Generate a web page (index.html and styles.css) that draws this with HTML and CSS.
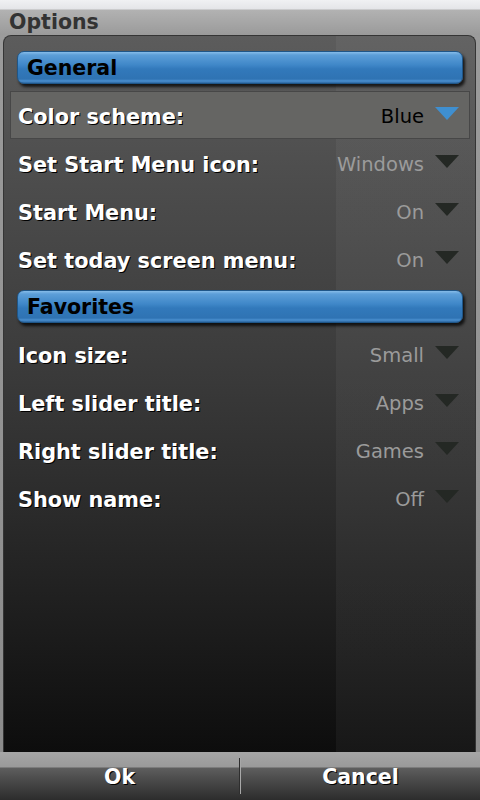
FILE: index.html
```html
<!DOCTYPE html>
<html>
<head>
<meta charset="utf-8">
<link rel="stylesheet" href="styles.css">
</head>
<body>
<div class="screen">
  <div class="titlebar"><span class="title">Options</span></div>
  <div class="panel">
    <div class="section">General</div>
    <div class="row selected"><span class="label">Color scheme:</span><span class="value">Blue</span><span class="arrow"></span></div>
    <div class="row"><span class="label">Set Start Menu icon:</span><span class="value">Windows</span><span class="arrow"></span></div>
    <div class="row"><span class="label">Start Menu:</span><span class="value">On</span><span class="arrow"></span></div>
    <div class="row"><span class="label">Set today screen menu:</span><span class="value">On</span><span class="arrow"></span></div>
    <div class="section">Favorites</div>
    <div class="row"><span class="label">Icon size:</span><span class="value">Small</span><span class="arrow"></span></div>
    <div class="row"><span class="label">Left slider title:</span><span class="value">Apps</span><span class="arrow"></span></div>
    <div class="row"><span class="label">Right slider title:</span><span class="value">Games</span><span class="arrow"></span></div>
    <div class="row"><span class="label">Show name:</span><span class="value">Off</span><span class="arrow"></span></div>
  </div>
  <div class="softkeys">
    <div class="softkey">Ok</div>
    <div class="divider"></div>
    <div class="softkey">Cancel</div>
  </div>
</div>
</body>
</html>
```
FILE: styles.css
```css
html, body {
  margin: 0;
  padding: 0;
}
body {
  width: 480px;
  height: 800px;
  overflow: hidden;
  font-family: "DejaVu Sans", Verdana, sans-serif;
}
.screen {
  width: 480px;
  height: 800px;
  display: flex;
  flex-direction: column;
  background: linear-gradient(#9c9c9c, #8a8a8a);
}
.titlebar {
  height: 35px;
  flex: none;
  box-sizing: border-box;
  padding: 11px 0 0 9px;
  background: linear-gradient(#f0f1f3 0, #e4e5e8 9px, #b2b2b2 10px, #9a9a9a 35px);
}
.title {
  display: block;
  font-weight: bold;
  font-size: 20.5px;
  line-height: 22px;
  color: #333;
}
.panel {
  flex: 1;
  margin: 0 4px 0 3px;
  border: 1px solid #353535;
  border-bottom: none;
  border-radius: 8px 8px 0 0;
  padding-top: 8px;
  background:
    linear-gradient(to right, transparent 332px, rgba(255,255,255,0.045) 332px),
    linear-gradient(#5c5c5c 0, #4c4c4c 150px, #3c3c3c 320px, #2a2a2a 480px, #191919 620px, #0d0d0d 100%);
}
.section {
  height: 33px;
  margin: 7px 12px 7px 13px;
  box-sizing: border-box;
  padding: 1px 0 0 9px;
  border-radius: 7px;
  border: 1px solid #1f5688;
  background: linear-gradient(#86bce9 0, #5c9ed8 3px, #3f87c8 13px, #3279bb 17px, #2f73b3 27px, #4a8fcf 29px, #2c67a1 31px);
  box-shadow: 2px 3px 3px rgba(0,0,0,0.75);
  font-weight: bold;
  font-size: 20.5px;
  line-height: 31px;
  color: #000;
}
.row {
  height: 48px;
  box-sizing: border-box;
  margin: 0 5px 0 6px;
  border: 1px solid transparent;
  padding: 3px 10px 0 7px;
  display: flex;
  align-items: center;
}
.row.selected {
  background: #656563;
  border-color: #474747;
}
.label {
  font-weight: bold;
  font-size: 20.8px;
  color: #fff;
  text-shadow: 1px 1px 0 #000;
  white-space: nowrap;
}
.value {
  margin-left: auto;
  font-size: 19.5px;
  color: #9b9b9b;
}
.selected .value {
  color: #000;
}
.arrow {
  width: 0;
  height: 0;
  margin-left: 11px;
  margin-top: -6px;
  border-left: 12px solid transparent;
  border-right: 12px solid transparent;
  border-top: 13px solid #242824;
}
.selected .arrow {
  border-top-color: #3f8fd0;
}
.softkeys {
  height: 48px;
  flex: none;
  display: flex;
  background: linear-gradient(#a6a6a6 0, #9a9a9a 15px, #5e5e5e 16px, #4a4a4a 28px, #2c2c2c 48px);
}
.softkey {
  flex: 1;
  text-align: center;
  padding-top: 14px;
  font-weight: bold;
  font-size: 20.5px;
  line-height: 22px;
  color: #fff;
  text-shadow: 1px 1px 0 #000;
}
.divider {
  width: 0;
  margin: 6px 0;
  border-left: 1px solid #2e2e2e;
  border-right: 1px solid #a8a8a8;
}
```
